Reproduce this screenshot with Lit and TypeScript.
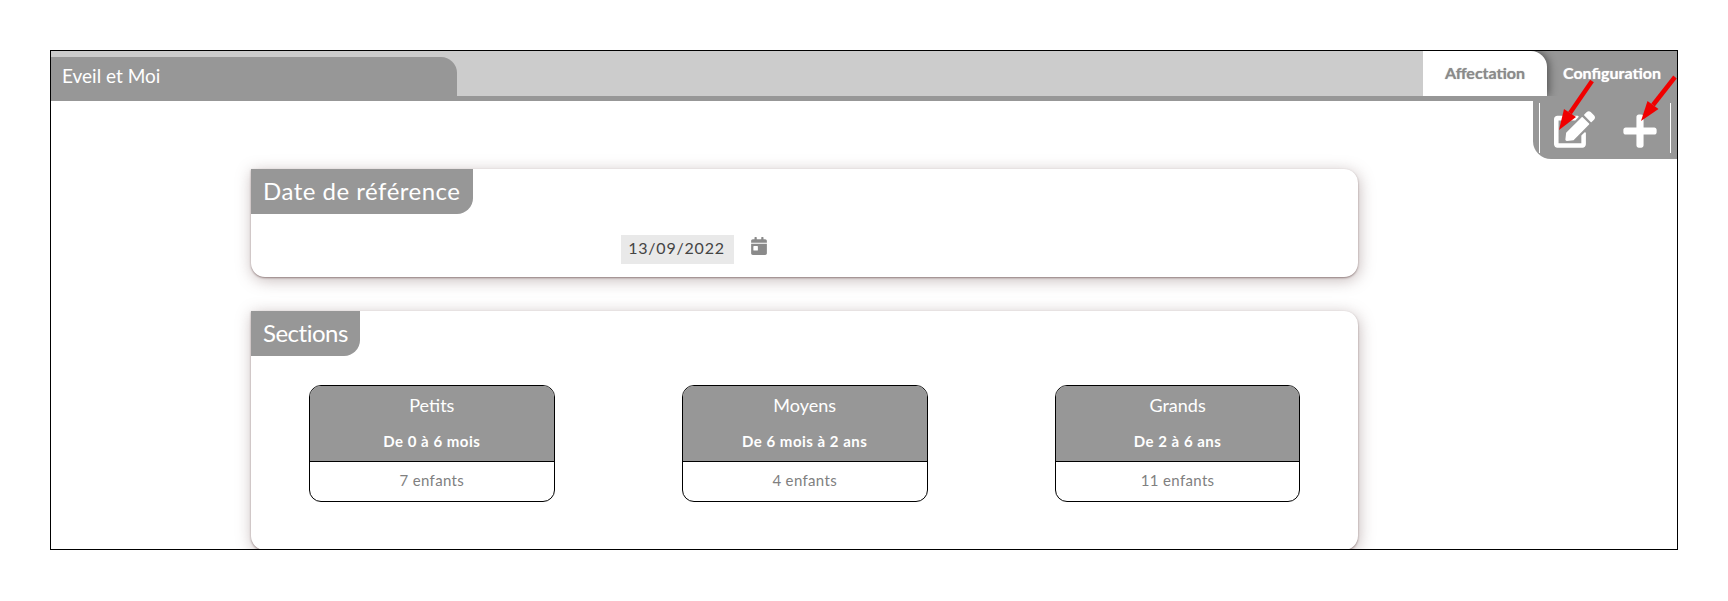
import { LitElement, html, css, svg } from "lit";
import { customElement } from "lit/decorators.js";

const sections = [
  { name: "Petits", age: "De 0 à 6 mois", count: "7 enfants" },
  { name: "Moyens", age: "De 6 mois à 2 ans", count: "4 enfants" },
  { name: "Grands", age: "De 2 à 6 ans", count: "11 enfants" },
];

@customElement("app-root")
export class AppRoot extends LitElement {
  static styles = css`
    :host { display: block; padding: 50px 50px 0; font-family: "Lato", "Liberation Sans", sans-serif; background: #fff; }
    * { box-sizing: border-box; }
    .frame { position: relative; width: 1628px; height: 500px; border: 1px solid #000; overflow: hidden; background: #fff; }
    .header { display: flex; height: 50px; background: #ccc; border-bottom: 5px solid #979797; }
    .title { width: 406px; height: 44px; margin-top: 6px; padding: 7px 0 0 11px; background: #979797; color: #fff; font-size: 19px; line-height: 24px; border-top-right-radius: 16px; }
    .spacer { flex: 1; }
    .tab { height: 45px; text-align: center; font-size: 16px; font-weight: 700; line-height: 43px; }
    .tab.a { position: relative; z-index: 1; width: 124px; background: #fff; color: #8a8a8a; border-top-right-radius: 16px; box-shadow: 2px 0 8px rgba(0, 0, 0, .45); clip-path: inset(0 -20px 0 0); text-shadow: 0 0 1px rgba(120, 120, 120, .6); }
    .tab.c { width: 146px; margin-left: -16px; padding-left: 16px; background: #979797; color: #fff; text-shadow: 0 0 1px rgba(255, 255, 255, .7); }
    .actions-row { display: flex; justify-content: flex-end; }
    .actions { width: 144px; height: 58px; background: #979797; border-bottom-left-radius: 18px; padding: 2px 6px 6px; }
    .actions-in { height: 50px; border-left: 1px solid #fff; border-right: 1px solid #fff; display: flex; align-items: flex-start; }
    .edit { width: 41px; height: 37px; margin: 8px 0 0 14px; fill: #fff; }
    .plus { width: 34px; height: 38px; margin: 9px 0 0 28px; fill: #fff; }
    .arrows { position: absolute; left: 0; top: 0; width: 1626px; height: 498px; pointer-events: none; z-index: 2; }
    .card { position: relative; width: 1107px; margin: 10px 0 0 200px; background: #fff; border-radius: 0 14px 14px 14px; box-shadow: 0 1px 2px rgba(90, 60, 60, .55), 1px 3px 16px rgba(110, 80, 80, .4); }
    .card.date { height: 108px; }
    .card.sec { height: 239px; margin-top: 34px; }
    .legend { display: inline-block; height: 45px; padding: 0 12px; background: #979797; color: #fff; font-size: 24px; line-height: 43px; border-bottom-right-radius: 16px; vertical-align: top; }
    .legend.d { letter-spacing: .5px; }
    .legend.s { letter-spacing: -.5px; }
    .date-row { display: flex; align-items: flex-start; margin: 21px 0 0 370px; }
    .date-val { width: 113px; height: 29px; padding-right: 2px; background: #e9e9e9; color: #444; font-size: 16px; letter-spacing: .8px; line-height: 26px; text-align: center; }
    .cal { width: 16px; height: 18px; margin: 2px 0 0 17px; fill: #8a8a8a; }
    .boxes { display: flex; gap: 127.25px; margin: 29px 0 0 58px; }
    .box { width: 245.65px; height: 117px; border: 1px solid #000; border-radius: 12px; overflow: hidden; display: flex; flex-direction: column; }
    .box-head { height: 76px; background: #979797; border-bottom: 1px solid #000; color: #fff; text-align: center; }
    .box-name { font-size: 18px; line-height: 24px; margin-top: 7px; }
    .box-age { font-size: 15px; font-weight: 700; letter-spacing: .5px; line-height: 18px; margin-top: 15px; }
    .box-count { flex: 1; text-align: center; color: #808080; font-size: 15px; letter-spacing: .35px; line-height: 37px; }
  `;

  render() {
    return html`
      <div class="frame">
        <div class="header">
          <div class="title">Eveil et Moi</div>
          <div class="spacer"></div>
          <div class="tab a">Affectation</div>
          <div class="tab c">Configuration</div>
        </div>
        <div class="actions-row">
          <div class="actions"><div class="actions-in">
            <svg class="edit" viewBox="0 0 576 512"><path d="M402.6 83.2l90.2 90.2c3.8 3.8 3.8 10 0 13.8L274.4 405.6l-92.8 10.3c-12.4 1.4-22.9-9.1-21.5-21.5l10.3-92.8L388.8 83.2c3.8-3.8 10-3.8 13.8 0zm162-22.9l-48.8-48.8c-15.2-15.2-39.9-15.2-55.2 0l-35.4 35.4c-3.8 3.8-3.8 10 0 13.8l90.2 90.2c3.8 3.8 10 3.8 13.8 0l35.4-35.4c15.2-15.3 15.2-40 0-55.2zM384 346.2V448H64V128h229.8c3.2 0 6.2-1.3 8.5-3.5l40-40c7.6-7.6 2.2-20.5-8.5-20.5H48C21.5 64 0 85.5 0 112v352c0 26.5 21.5 48 48 48h352c26.5 0 48-21.5 48-48V306.2c0-10.7-12.9-16-20.5-8.5l-40 40c-2.2 2.3-3.5 5.3-3.5 8.5z"/></svg>
            <svg class="plus" viewBox="0 0 448 512"><path d="M416 208H272V64c0-17.67-14.33-32-32-32h-32c-17.67 0-32 14.33-32 32v144H32c-17.67 0-32 14.33-32 32v32c0 17.67 14.33 32 32 32h144v144c0 17.67 14.33 32 32 32h32c17.67 0 32-14.33 32-32V304h144c17.67 0 32-14.33 32-32v-32c0-17.67-14.33-32-32-32z"/></svg>
          </div></div>
        </div>
        <div class="card date">
          <div class="legend d">Date de référence</div>
          <div class="date-row">
            <div class="date-val">13/09/2022</div>
            <svg class="cal" viewBox="0 0 448 512"><path d="M0 464c0 26.5 21.5 48 48 48h352c26.5 0 48-21.5 48-48V192H0v272zm64-192c0-8.8 7.2-16 16-16h96c8.8 0 16 7.2 16 16v96c0 8.8-7.2 16-16 16H80c-8.8 0-16-7.2-16-16v-96zM400 64h-48V16c0-8.8-7.2-16-16-16h-32c-8.8 0-16 7.2-16 16v48H160V16c0-8.8-7.2-16-16-16h-32c-8.8 0-16 7.2-16 16v48H48C21.5 64 0 85.5 0 112v48h448v-48c0-26.5-21.5-48-48-48z"/></svg>
          </div>
        </div>
        <div class="card sec">
          <div class="legend s">Sections</div>
          <div class="boxes">
            ${sections.map(s => html`
              <div class="box">
                <div class="box-head">
                  <div class="box-name">${s.name}</div>
                  <div class="box-age">${s.age}</div>
                </div>
                <div class="box-count">${s.count}</div>
              </div>`)}
          </div>
        </div>
        <svg class="arrows" viewBox="0 0 1626 498">
          ${svg`
            <path d="M1541 30 L1519 62" stroke="#f00000" stroke-width="4.5" fill="none"/>
            <path d="M1508 79 L1513 58 L1525 66 Z" fill="#f00000"/>
            <path d="M1624 26 L1602 54" stroke="#f00000" stroke-width="4.5" fill="none"/>
            <path d="M1590 70 L1596.5 50 L1607.5 58 Z" fill="#f00000"/>
          `}
        </svg>
      </div>
    `;
  }
}
